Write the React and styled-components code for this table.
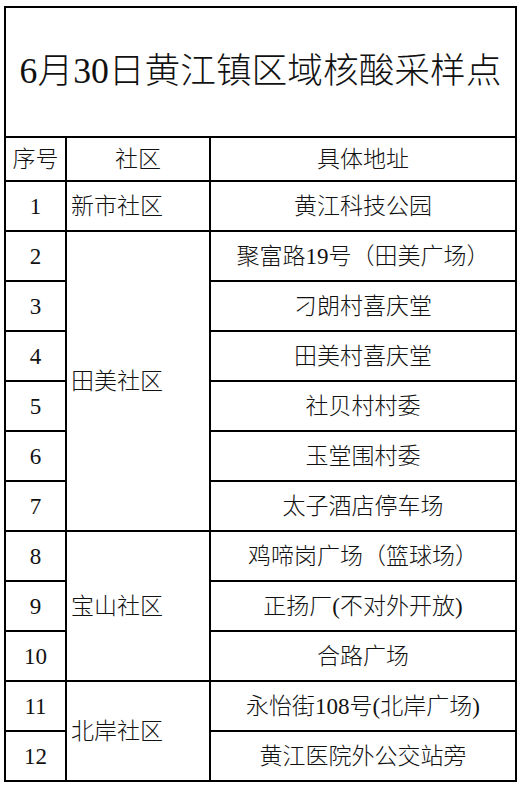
import React from 'react'
import styled, { createGlobalStyle } from 'styled-components'

const GlobalStyle = createGlobalStyle`
  html, body {
    margin: 0;
    padding: 0;
    background: #fff;
  }
  body {
    font-family: "Liberation Serif", "Noto Sans CJK SC", serif;
    color: #111;
  }
`

const groups = [
  { name: '新市社区', items: ['黄江科技公园'] },
  {
    name: '田美社区',
    items: ['聚富路19号（田美广场）', '刁朗村喜庆堂', '田美村喜庆堂', '社贝村村委', '玉堂围村委', '太子酒店停车场'],
  },
  { name: '宝山社区', items: ['鸡啼岗广场（篮球场）', '正扬厂(不对外开放)', '合路广场'] },
  { name: '北岸社区', items: ['永怡街108号(北岸广场)', '黄江医院外公交站旁'] },
]

const App = () => {
  let n = 0
  return (
    <>
      <GlobalStyle />
      <Page>
        <Table>
          <colgroup>
            <col style={{ width: 61 }} />
            <col style={{ width: 144 }} />
            <col />
          </colgroup>
          <tbody>
            <tr>
              <Title colSpan={3}>6月30日黄江镇区域核酸采样点</Title>
            </tr>
            <tr>
              <Head>序号</Head>
              <Head>社区</Head>
              <Head>具体地址</Head>
            </tr>
            {groups.map((g) =>
              g.items.map((addr, i) => {
                n += 1
                return (
                  <Row key={n}>
                    <Num>{n}</Num>
                    {i === 0 && <Community rowSpan={g.items.length}>{g.name}</Community>}
                    <Address>{addr}</Address>
                  </Row>
                )
              })
            )}
          </tbody>
        </Table>
      </Page>
    </>
  )
}

const Page = styled.div`
  padding: 6px 0 0 4px;
`

const Table = styled.table`
  width: 513px;
  border-collapse: collapse;
  table-layout: fixed;

  td {
    border: 2px solid #000;
    padding: 0;
    font-size: 23px;
    line-height: 1;
    color: #111;
    font-weight: 300;
    white-space: nowrap;
  }
`

const Title = styled.td`
  height: 128px;
  text-align: center;
  && {
    font-size: 35.7px;
  }
`

const Head = styled.td`
  height: 42px;
  text-align: center;
`

const Row = styled.tr`
  height: 50px;
`

const Num = styled.td`
  text-align: center;
`

const Community = styled.td`
  text-align: left;
  && {
    padding-left: 4px;
  }
`

const Address = styled.td`
  text-align: center;
`

export default App
